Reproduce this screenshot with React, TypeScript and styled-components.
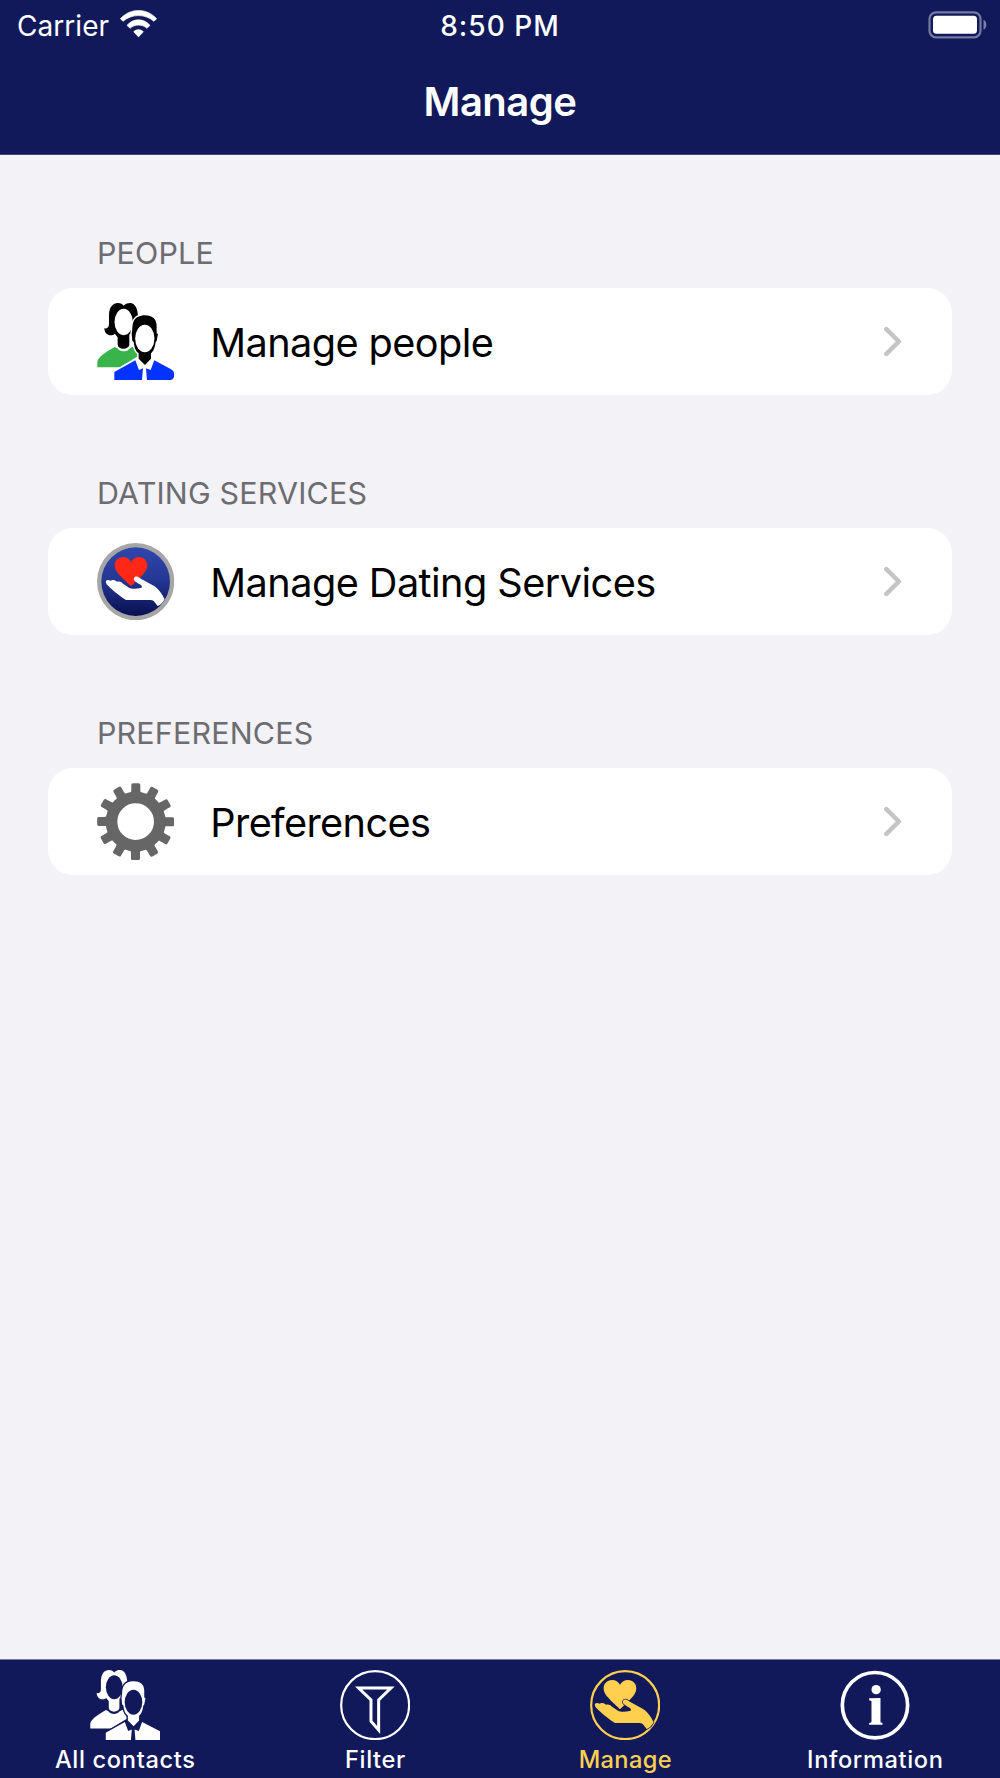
import React from 'react';
import styled, { createGlobalStyle } from 'styled-components';

const NAVY = '#11195b';
const GOLD = '#ffd04f';

const GlobalStyle = createGlobalStyle`
  *, *::before, *::after { box-sizing: border-box; }
  body {
    margin: 0;
    background: #f2f2f7;
    font-family: Inter, "Liberation Sans", sans-serif;
    -webkit-font-smoothing: antialiased;
  }
`;

const Screen = styled.div`
  width: 1000px;
  height: 1778px;
  display: flex;
  flex-direction: column;
  background: #f2f2f7;
  overflow: hidden;
`;

const Header = styled.header`
  height: 155px;
  flex: none;
  background: ${NAVY};
  border-bottom: 1px solid #3f457b;
`;

const StatusBar = styled.div`
  height: 51px;
  display: grid;
  grid-template-columns: 1fr auto 1fr;
  align-items: center;
  padding: 1px 13px 0 17px;
  color: #fff;
  font-size: 28px;
  line-height: 50px;
`;

const Carrier = styled.div`
  display: flex;
  align-items: center;
  gap: 11px;
  letter-spacing: 0.05px;
  svg { margin-top: -3.5px; }
`;

const Clock = styled.div`
  font-weight: 500;
  letter-spacing: 1px;
  margin-left: -4px;
`;

const Battery = styled.div`
  display: flex;
  justify-content: flex-end;
  padding-bottom: 3px;
`;

const Title = styled.h1`
  margin: 0;
  height: 103px;
  text-align: center;
  color: #fff;
  font-size: 40px;
  font-weight: 600;
  line-height: 102px;
  letter-spacing: -0.5px;
`;

const Main = styled.main`
  flex: 1;
  padding: 0 48px;
`;

const Section = styled.section`
  height: 240px;
  &:first-child { margin-top: 48px; }
`;

const SectionTitle = styled.h2`
  margin: 0;
  height: 85px;
  padding: 30px 0 0 49px;
  color: #6c6c71;
  font-size: 30.4px;
  font-weight: 400;
  line-height: 40px;
  letter-spacing: 0.2px;
`;

const Row = styled.a`
  height: 106.6px;
  display: flex;
  align-items: center;
  padding: 0 50px 0 48.500px;
  border-radius: 25px;
  background: #fff;
  color: #000;
`;

const RowLabel = styled.span<{ $spacing: number }>`
  flex: 1;
  margin-left: 36.5px;
  padding-top: 3.5px;
  font-size: 39.7px;
  line-height: 50px;
  letter-spacing: ${p => p.$spacing}px;
`;

const TabBar = styled.nav`
  height: 119px;
  flex: none;
  display: grid;
  grid-template-columns: repeat(4, 1fr);
  background: ${NAVY};
  border-top: 1px solid #7d7d93;
`;

const Tab = styled.a<{ $active?: boolean }>`
  display: flex;
  flex-direction: column;
  align-items: center;
  padding: 9.5px 0 0 0.7px;
  color: ${p => (p.$active ? GOLD : '#fff')};
`;

const TabLabel = styled.span<{ $spacing: number }>`
  margin-top: 4.5px;
  font-size: 23.6px;
  font-weight: 500;
  line-height: 32px;
  letter-spacing: ${p => p.$spacing}px;
`;

const WifiIcon = () => (
  <svg width="37" height="28" viewBox="360 29 111 84" fill="#fff">
    <path d="M361 55 C392 22 439 22 470 55 L462 63 C435 40 396 40 369 63Z" stroke="#fff" strokeWidth="2" strokeLinejoin="round" />
    <path d="M381 75 C401 53 430 53 450 75 L441 84 C427 71 404 71 390 84Z" stroke="#fff" strokeWidth="2" strokeLinejoin="round" />
    <path d="M400 94 C408 84 423 84 431 94 L415.500 111Z" />
  </svg>
);

const BatteryIcon = () => (
  <svg width="59" height="28" viewBox="0 0 59 28">
    <rect x="1.500" y="1.300" width="51" height="25" rx="6.500" fill="none" stroke="#fff" strokeOpacity=".42" strokeWidth="2.200" />
    <rect x="5" y="4.800" width="44" height="18" rx="3.500" fill="#fff" />
    <path d="M55.500 8.800 C59.300 10 59.300 17.600 55.500 18.800Z" fill="#fff" fillOpacity=".45" />
  </svg>
);

type PeopleProps = { size: number; bg: string; ink: string; back: string; front: string; rounded?: boolean };

const PeopleIcon = ({ size, bg, ink, back, front, rounded }: PeopleProps) => (
  <svg width={size} height={size} viewBox="35 38 232 232">
    <path fill={ink} d="M57 113 C62 117 71 113 71 102 L71 76 C71 50 83 38 98 38 C106 38 111 41 115 46 C120 40 128 38 135 38 C148 38 158 54 158 80 L150 130 L132 132 L132 162 C132 180 97 180 97 162 L97 141 C94 138 92 134 89 130 C80 138 58 138 57 113Z" />
    <ellipse cx="115" cy="95" rx="27.500" ry="39.500" fill={bg} />
    <path fill={back} d="M36 231 L36 214 C39 201 55 189 88 170 L96 174 C103 186 125 186 132 175 L142 169 L153 184 L158 198 L104 231Z" />
    <path
      d="M180 75 C163 75 149 81 144 96 C140 105 142 122 139 130 L141 151 L145 155 C147 171 151 183 160 189 L160 210 L150 210 L87 245 L87 270 L200 270 L200 75Z"
      fill={bg}
      stroke={bg}
      strokeWidth="9"
    />
    <path fill={ink} d="M139 130 C142 122 140 105 144 96 C149 81 163 75 180 75 C199 75 214 85 214 106 L214 129 L218 131 L214 152 L211 155 C209 171 204 184 197 189 L197 205 L179 224 L160 205 L160 189 C151 183 147 171 145 155 L141 151Z" />
    <ellipse cx="178.500" cy="144.500" rx="29" ry="41" fill={bg} />
    <path fill={front} d="M87 270 L87 245 L150 210 L161 239 L173 234 L170 270Z" />
    <path
      fill={front}
      d={rounded
        ? 'M185 270 L182 234 L196 239 L207 210 L256 236 C266 242 267 248 267 254 C267 264 260 270 249 270Z'
        : 'M185 270 L182 234 L196 239 L207 210 L267 241 L267 270Z'}
    />
  </svg>
);

const HEART = 'M137 94 C142 85 151 80 161 80 C176 80 186 91 186 105 C186 120 175 131 166 140 L137 168 L110 142 C98 130 88 119 88 105 C88 91 98 80 113 80 C124 80 132 86 137 94Z';
const HAND = 'M62 157 C60 150 66 147 76 151 C80 147 90 149 95 154 C102 152 109 154 111 159 L131 172 C140 177 155 175 169 172 C172 167 167 163 160 160 L149 153 C141 146 147 136 157 139 L168 146 L205 166 C221 175 231 193 238 206 C234 216 226 224 217 227 L207 214 C204 210 198 209 190 209 L122 209 C111 203 85 184 64 162Z';

const ServicesBadge = () => (
  <svg width="77.300" height="77.300" viewBox="35 38 232 232">
    <defs>
      <linearGradient id="badge" x1="0" y1="0" x2="0" y2="1">
        <stop offset="0" stopColor="#2e46ad" />
        <stop offset=".45" stopColor="#263896" />
        <stop offset="1" stopColor="#090f50" />
      </linearGradient>
    </defs>
    <circle cx="151" cy="154" r="116" fill="#a6a6a6" />
    <circle cx="151" cy="154" r="103" fill="url(#badge)" />
    <path d={HEART} fill="#ff2716" />
    <path d={HAND} fill="#fff" />
  </svg>
);

const ManageIcon = () => (
  <svg width="70.300" height="70.300" viewBox="88 59 211 211">
    <circle cx="193.500" cy="164.500" r="102" fill="none" stroke={GOLD} strokeWidth="6.500" />
    <g transform="translate(41 9)" fill={GOLD}>
      <path d={HEART} />
      <path d={HAND} stroke={NAVY} strokeWidth="4" paintOrder="stroke" />
    </g>
  </svg>
);

const GearIcon = () => (
  <svg width="77.300" height="77.300" viewBox="35 38.500 232 232" fill="#666">
    {Array.from({ length: 12 }, (_, i) => (
      <path
        key={i}
        transform={`rotate(${i * 30} 151 154.500)`}
        d="M130 74 C137 70 138 65 138 58 L138 44 Q138 39 143 39 L160 39 Q165 39 165 44 L165 58 C165 65 166 70 173 74Z"
      />
    ))}
    <circle cx="151" cy="154.500" r="72.500" fill="none" stroke="#666" strokeWidth="35" />
  </svg>
);

const FilterIcon = () => (
  <svg width="70.300" height="70.300" viewBox="62 59 211 211" fill="none" stroke="#fff">
    <circle cx="167.500" cy="164.500" r="102" strokeWidth="6.500" />
    <path d="M118 113 L215 113 L178 149 L178 239 L155 213 L155 149Z" strokeWidth="9" />
  </svg>
);

const InfoIcon = () => (
  <svg width="70.300" height="70.300" viewBox="151.500 59 211 211" fill="#fff">
    <circle cx="256.500" cy="164.500" r="98" fill="none" stroke="#fff" strokeWidth="11" />
    <circle cx="260" cy="118" r="14" />
    <path d="M239 144 L273 143 L273 216 L279 218 L279 223 L239 223 L239 218 L246 216 L246 152 L239 150Z" />
  </svg>
);

const Chevron = () => (
  <svg width="18" height="31" viewBox="131 138.500 54 93" fill="none" stroke="#c4c4c6" strokeWidth="13.500" strokeLinecap="round" strokeLinejoin="round">
    <path d="M138 148 L175.500 185 L138 222" />
  </svg>
);

const sections = [
  {
    title: 'PEOPLE', label: 'Manage people', spacing: -0.6,
    icon: <PeopleIcon size={77.3} bg="#fff" ink="#000" back="#39b44a" front="#0433ff" rounded />,
  },
  { title: 'DATING SERVICES', label: 'Manage Dating Services', spacing: -0.57, icon: <ServicesBadge /> },
  { title: 'PREFERENCES', label: 'Preferences', spacing: -0.65, icon: <GearIcon /> },
];

const tabs = [
  { label: 'All contacts', spacing: 0.68, icon: <PeopleIcon size={70.3} bg={NAVY} ink="#fff" back="#fff" front="#fff" /> },
  { label: 'Filter', spacing: 0.6, icon: <FilterIcon /> },
  { label: 'Manage', spacing: 0.4, icon: <ManageIcon />, active: true },
  { label: 'Information', spacing: 0.65, icon: <InfoIcon /> },
];

export default function App() {
  return (
    <Screen>
      <GlobalStyle />
      <Header>
        <StatusBar>
          <Carrier>Carrier<WifiIcon /></Carrier>
          <Clock>8:50 PM</Clock>
          <Battery><BatteryIcon /></Battery>
        </StatusBar>
        <Title>Manage</Title>
      </Header>
      <Main>
        {sections.map(s => (
          <Section key={s.title}>
            <SectionTitle>{s.title}</SectionTitle>
            <Row>
              {s.icon}
              <RowLabel $spacing={s.spacing}>{s.label}</RowLabel>
              <Chevron />
            </Row>
          </Section>
        ))}
      </Main>
      <TabBar>
        {tabs.map(t => (
          <Tab key={t.label} $active={t.active}>
            {t.icon}
            <TabLabel $spacing={t.spacing}>{t.label}</TabLabel>
          </Tab>
        ))}
      </TabBar>
    </Screen>
  );
}
